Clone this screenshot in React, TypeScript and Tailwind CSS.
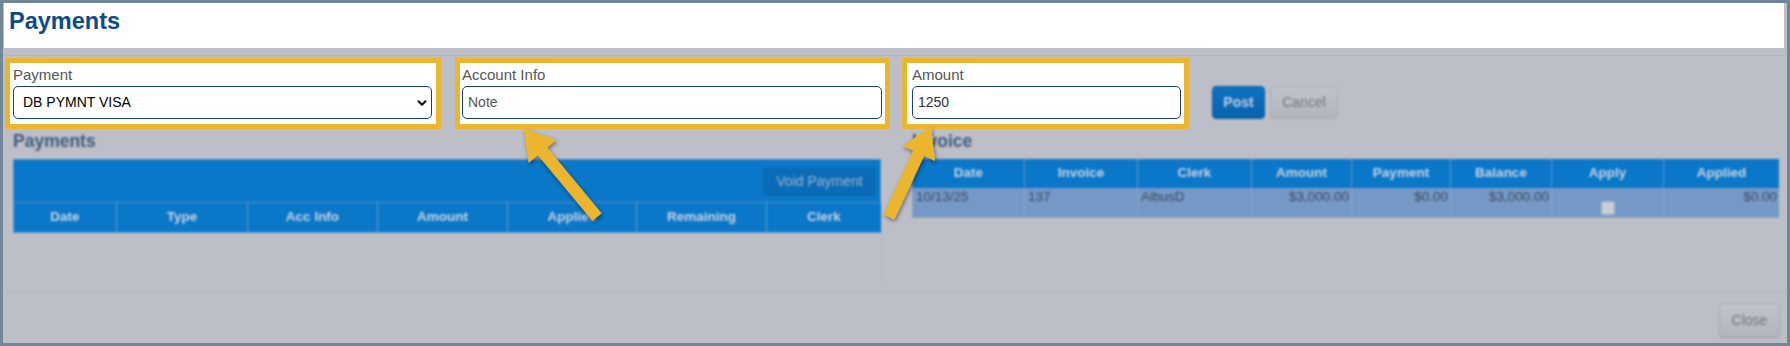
import React from "react";

function arrowPoints(tx: number, ty: number, hx: number, hy: number, sw = 12, hl = 29, hw = 36) {
  const dx = hx - tx;
  const dy = hy - ty;
  const L = Math.hypot(dx, dy);
  const ux = dx / L;
  const uy = dy / L;
  const px = -uy;
  const py = ux;
  const bx = hx - ux * hl;
  const by = hy - uy * hl;
  const pts = [
    [tx + (px * sw) / 2, ty + (py * sw) / 2],
    [bx + (px * sw) / 2, by + (py * sw) / 2],
    [bx + (px * hw) / 2, by + (py * hw) / 2],
    [hx, hy],
    [bx - (px * hw) / 2, by - (py * hw) / 2],
    [bx - (px * sw) / 2, by - (py * sw) / 2],
    [tx - (px * sw) / 2, ty - (py * sw) / 2],
  ];
  return pts.map((p) => `${p[0].toFixed(1)},${p[1].toFixed(1)}`).join(" ");
}

const payCols = ["Date", "Type", "Acc Info", "Amount", "Applies", "Remaining", "Clerk"];
const invCols = ["Date", "Invoice", "Clerk", "Amount", "Payment", "Balance", "Apply", "Applied"];

export default function App() {
  return (
    <div className="relative w-[1790px] h-[346px] font-['Liberation_Sans',Arial,sans-serif]">
      <div className="w-full h-full bg-[#bcbfc7] border-[3px] border-[#72869a] flex flex-col overflow-hidden">
        {/* Header */}
        <div className="h-[45px] shrink-0 bg-white ml-[1px] mr-[3px] pl-[5px] pt-[6px]">
          <h1 className="text-[23.5px] leading-[24px] font-bold text-[#0b4a8c]">Payments</h1>
        </div>
        <div className="h-[8px] shrink-0 border-b border-[#b2b5bd]" />

        {/* Form row */}
        <div className="flex items-start mt-[2px] pl-[2px] shrink-0">
          <div className="w-[436px] h-[71px] border-[5px] border-[#ebb52e] bg-white pl-[3px] pr-[4px]">
            <div className="h-[23px] pt-[1px] text-[15px] leading-[22px] text-[#555555]">Payment</div>
            <div className="h-[33px] border-[1.5px] border-[#17407c] rounded-[5px] flex items-center justify-between pl-[9px] pr-[3px] text-[14px] text-black">
              <span>DB PYMNT VISA</span>
              <svg width="12" height="12" viewBox="0 0 12 12">
                <path d="M2.5 4.2 L6 7.7 L9.5 4.2" fill="none" stroke="#111" strokeWidth="2" strokeLinecap="round" strokeLinejoin="round" />
              </svg>
            </div>
          </div>
          <div className="ml-[14px] w-[435px] h-[71px] border-[5px] border-[#ebb52e] bg-white pl-[2px] pr-[3px]">
            <div className="h-[23px] pt-[1px] text-[15px] leading-[22px] text-[#555555]">Account Info</div>
            <div className="h-[33px] border-[1.5px] border-[#17407c] rounded-[5px] flex items-center pl-[5px] text-[14px] text-[#555555]">
              Note
            </div>
          </div>
          <div className="ml-[12px] w-[287px] h-[71px] border-[5px] border-[#ebb52e] bg-white pl-[5px] pr-[3px]">
            <div className="h-[23px] pt-[1px] text-[15px] leading-[22px] text-[#555555]">Amount</div>
            <div className="h-[33px] border-[1.5px] border-[#17407c] rounded-[5px] flex items-center pl-[5px] text-[14px] text-[#333333]">
              1250
            </div>
          </div>
          <div className="ml-[23px] mt-[28px] flex gap-[5px] blur-[0.8px]">
            <div className="w-[53px] h-[33px] rounded-[4px] bg-gradient-to-b from-[#0c72c3] to-[#0a62ad] border border-[#0a5da4] flex items-center justify-center text-[14px] font-bold text-[#bfcfe2]">
              Post
            </div>
            <div className="w-[68px] h-[33px] rounded-[4px] bg-gradient-to-b from-[#c0c3c9] to-[#b2b5bc] border border-[#a9acb3] flex items-center justify-center text-[14px] text-[#74777d]">
              Cancel
            </div>
          </div>
        </div>

        {/* Body */}
        <div className="flex-1 flex items-start mt-[1px] blur-[0.8px]">
          {/* Payments panel */}
          <div className="ml-[10px] w-[869px] flex flex-col">
            <div className="h-[29px] pt-[1px] text-[17.5px] leading-[20px] font-bold text-[#3e5a80]">Payments</div>
            <div className="w-[868px] h-[44px] bg-[#0a77c8] border border-[#4f8fcf] flex items-center justify-end pr-[5px]">
              <div className="w-[111px] h-[26px] rounded-[3px] bg-[#0a6bb8] shadow-[0_1px_2px_rgba(0,0,0,0.25)] flex items-center justify-center text-[14px] text-[#9cb4cf]">
                Void Payment
              </div>
            </div>
            <div className="w-[868px] grid grid-cols-[103px_131px_130px_130px_129px_130px_115px] h-[30px] border-b border-r border-[#5f98d2]">
              {payCols.map((c) => (
                <div
                  key={c}
                  className="border-l border-[#5f98d2] bg-[#0a77c8] flex items-center justify-center text-[13.5px] font-bold text-[#c9d4e2]"
                >
                  {c}
                </div>
              ))}
            </div>
            <div className="h-[50px] border-r border-[#b4b7bf]" />
          </div>

          {/* Invoice panel */}
          <div className="ml-[29px] w-[868px] flex flex-col border-l border-[#b6b9c1]">
            <div className="h-[29px] pt-[1px] text-[17.5px] leading-[20px] font-bold text-[#3e5a80]">Invoice</div>
            <div className="w-[867px] grid grid-cols-[112px_113px_114px_100px_99px_101px_112px_116px] h-[29px] border-r border-[#5f98d2]">
              {invCols.map((c) => (
                <div
                  key={c}
                  className="border-l border-[#5f98d2] bg-[#0a77c8] flex items-center justify-center text-[13.5px] font-bold text-[#c9d4e2]"
                >
                  {c}
                </div>
              ))}
            </div>
            <div className="w-[867px] grid grid-cols-[112px_113px_114px_100px_99px_101px_112px_116px] h-[30px] bg-[#7598c7] border-b border-[#98a5b8] text-[13.5px] leading-[18px] text-[#3a4a62]">
              <div className="pl-[3px] border-l border-[#8aa4ca]">10/13/25</div>
              <div className="pl-[3px] border-l border-[#8aa4ca]">137</div>
              <div className="pl-[3px] border-l border-[#8aa4ca]">AlbusD</div>
              <div className="pr-[2px] text-right border-l border-[#8aa4ca]">$3,000.00</div>
              <div className="pr-[2px] text-right border-l border-[#8aa4ca]">$0.00</div>
              <div className="pr-[2px] text-right border-l border-[#8aa4ca]">$3,000.00</div>
              <div className="border-l border-[#8aa4ca] flex justify-center pt-[13px]">
                <div className="w-[14px] h-[14px] bg-[#c9ced7] border border-[#aab2be] rounded-[2px]" />
              </div>
              <div className="pr-[2px] text-right border-l border-[#8aa4ca]">$0.00</div>
            </div>
          </div>
        </div>

        {/* Footer */}
        <div className="h-[51px] shrink-0 border-t border-[#b0b3bb] flex justify-end items-start pt-[10px] pr-[7px] blur-[0.8px]">
          <div className="w-[61px] h-[34px] rounded-[4px] bg-gradient-to-b from-[#c0c3c9] to-[#b3b6bd] border border-[#a8abb2] shadow-[0_1px_1px_rgba(0,0,0,0.15)] flex items-center justify-center text-[14px] text-[#74777d]">
            Close
          </div>
        </div>
      </div>

      {/* Annotation arrows */}
      <svg className="absolute left-0 top-0 pointer-events-none" width="1790" height="346" viewBox="0 0 1790 346">
        <defs>
          <filter id="sh" x="-20%" y="-20%" width="140%" height="140%">
            <feDropShadow dx="1" dy="2" stdDeviation="2" floodColor="#000" floodOpacity="0.45" />
          </filter>
        </defs>
        <polygon points={arrowPoints(597, 217, 524, 129)} fill="#ebb52e" filter="url(#sh)" />
        <polygon points={arrowPoints(889, 217, 931, 127)} fill="#ebb52e" filter="url(#sh)" />
      </svg>
    </div>
  );
}
